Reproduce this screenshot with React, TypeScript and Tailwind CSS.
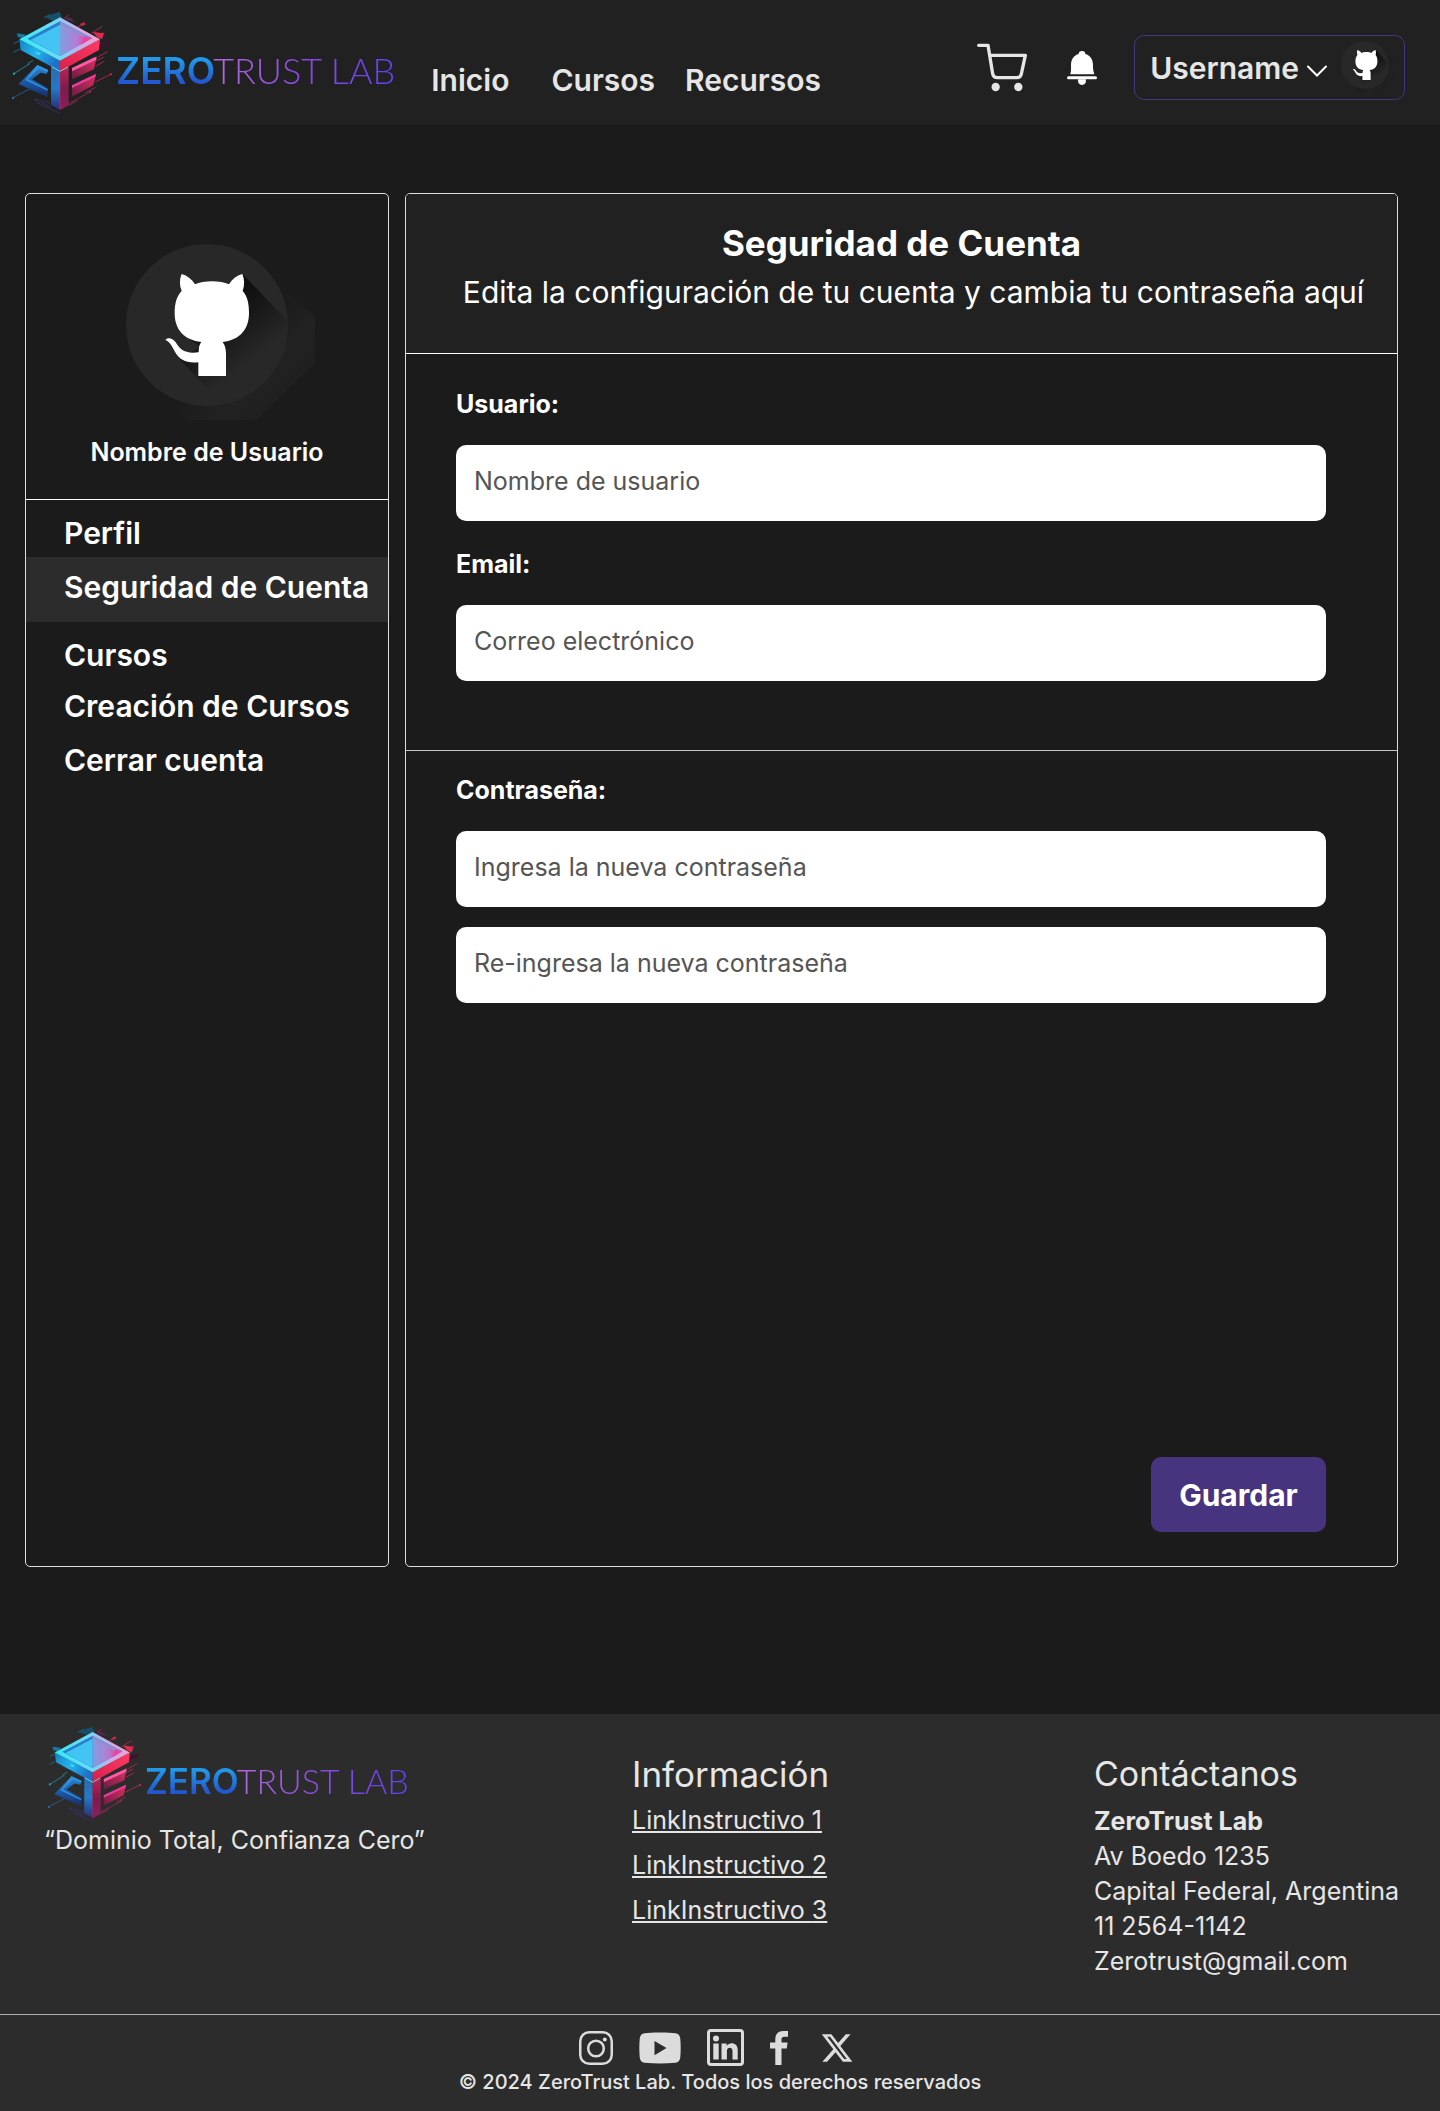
import { useId } from 'react';
import { FaXTwitter } from 'react-icons/fa6';

function CubeMark({ className }: { className: string }) {
  const id = useId();
  const u = (n: string) => `url(#${id}${n})`;
  return (
    <svg viewBox="36 36 300 306" className={className} aria-hidden="true">
      <defs>
        <linearGradient id={`${id}frame`} x1="0" x2="1" y1="0.3" y2="0.2">
          <stop offset="0" stopColor="#35ecf6" />
          <stop offset="0.45" stopColor="#6fd9f7" />
          <stop offset="0.7" stopColor="#c6aee8" />
          <stop offset="1" stopColor="#ff9ecb" />
        </linearGradient>
        <linearGradient id={`${id}inL`} x1="0" x2="1" y1="0" y2="1">
          <stop offset="0" stopColor="#3cc4f2" />
          <stop offset="1" stopColor="#48c4f4" />
        </linearGradient>
        <linearGradient id={`${id}inR`} x1="0" x2="1" y1="0" y2="0">
          <stop offset="0" stopColor="#7f9fe0" />
          <stop offset="0.55" stopColor="#b07fd6" />
          <stop offset="1" stopColor="#f03fa0" />
        </linearGradient>
        <linearGradient id={`${id}bandL`} x1="0" x2="1" y1="0" y2="0.5">
          <stop offset="0" stopColor="#1583c4" />
          <stop offset="0.5" stopColor="#23b5ee" />
          <stop offset="1" stopColor="#1d72c8" />
        </linearGradient>
        <linearGradient id={`${id}bandR`} x1="0" x2="1" y1="1" y2="0">
          <stop offset="0" stopColor="#d8204c" />
          <stop offset="1" stopColor="#ff3a62" />
        </linearGradient>
        <linearGradient id={`${id}z`} x1="0" x2="0" y1="0" y2="1">
          <stop offset="0" stopColor="#2888d0" />
          <stop offset="0.55" stopColor="#1c56a4" />
          <stop offset="1" stopColor="#182c66" />
        </linearGradient>
        <linearGradient id={`${id}pL`} x1="0" x2="0" y1="0" y2="1">
          <stop offset="0" stopColor="#2a6cb0" />
          <stop offset="0.5" stopColor="#2378c8" />
          <stop offset="1" stopColor="#2a2c74" />
        </linearGradient>
        <linearGradient id={`${id}pR`} x1="0" x2="0" y1="0" y2="1">
          <stop offset="0" stopColor="#c02456" />
          <stop offset="0.5" stopColor="#7c1c4a" />
          <stop offset="1" stopColor="#8a1f5c" />
        </linearGradient>
        <linearGradient id={`${id}e`} x1="0" x2="1" y1="1" y2="0">
          <stop offset="0" stopColor="#6b1c44" />
          <stop offset="1" stopColor="#e0305f" />
        </linearGradient>
      </defs>

      <g strokeWidth="2.5" fill="none" strokeLinecap="round">
        <path d="M134 52 150 44M150 50 178 38M44 130 66 118M50 102 72 110M42 156 58 148" stroke="#17789c" />
        <path d="M206 44 196 54M252 70 232 82M306 80 276 98M312 98 300 106M322 155 296 170M312 184 288 198M332 223 286 246M310 172 290 182" stroke="#c02a4c" />
        <path d="M42 221 88 192M84 190 98 182" stroke="#1f93b4" />
        <path d="M38 294 90 266M96 270 104 264" stroke="#2b62a8" />
        <path d="M270 276 204 312M286 262 256 278M206 316 232 302" stroke="#9c2a58" />
        <path d="M104 296 152 322M110 308 180 340M124 300 150 310" stroke="#3b2f70" />
      </g>
      <g>
        <path d="M146 46 178 36 186 52 160 62 138 54Z" fill="#154f68" />
        <path d="M186 50 214 54 224 66 206 62Z" fill="#5a2450" />
        <path d="M54 100 78 104 66 114 52 110Z" fill="#1a78a4" />
        <path d="M278 96 312 100 306 118 292 112Z" fill="#e02a50" />
        <path d="M300 128 332 122 318 138 298 142Z" fill="#3c1430" />
        <path d="M240 72 254 66 256 74 244 78Z" fill="#c42848" />
        <circle cx="42" cy="221" r="3.5" fill="#22a0c0" />
        <circle cx="39" cy="294" r="3.5" fill="#2b6cb8" />
        <circle cx="333" cy="223" r="3" fill="#d03058" />
        <circle cx="271" cy="275" r="2.5" fill="#c03058" />
        <circle cx="108" cy="300" r="3" fill="#2c3a80" />
      </g>

      <path d="M58 118 180 182V214L62 150Z" fill={u('bandL')} />
      <path d="M300 118 180 182V214L297 150Z" fill={u('bandR')} />
      <path d="M106 156 122 160 116 166Z" fill="#4fe0ff" />
      <path d="M180 52 300 118 180 182 58 118Z" fill={u('frame')} />
      <path d="M180 64 276 114 180 168 82 116Z" fill="#2a7fcb" />
      <path d="M180 64 276 114 262 122 180 78Z" fill="#8d8fd0" />
      <path d="M180 74V168L92 120Z" fill={u('inL')} />
      <path d="M180 74 266 120 180 168Z" fill={u('inR')} />
      <path d="M252 108 276 114 244 134Z" fill="#ee3f9f" opacity="0.8" />

      <path d="M112 195 145 210 140 222 122 218 96 238 143 264V292L56 252Z" fill={u('z')} />
      <path d="M112 195 145 210 142 216 116 206 84 238 143 268V272L76 240Z" fill="#2f92dc" />
      <path d="M153 199 180 214V331L153 314Z" fill={u('pL')} />
      <path d="M180 214 206 200V315L180 331Z" fill={u('pR')} />
      <path d="M155 200 180 214 204 201" fill="none" stroke="#6fd8ee" strokeWidth="3" />
      <path d="M180 230V326" stroke="#d03a78" strokeWidth="2" opacity="0.6" />

      <path d="M216 204 290 170 282 208 216 238Z" fill={u('e')} />
      <path d="M216 204 284 172 290 170 288 180 216 214Z" fill="#fb5aa4" />
      <path d="M216 256 288 222 280 256 216 290Z" fill={u('e')} />
      <path d="M216 256 288 222 286 230 216 264Z" fill="#ea3c9e" />
    </svg>
  );
}

function Logo({ small = false }: { small?: boolean }) {
  return (
    <a href="#" aria-label="ZeroTrust Lab" className="flex items-start gap-1">
      <CubeMark className={small ? 'w-[93px] shrink-0' : 'w-[100px] shrink-0'} />
      <span
        className={
          small
            ? 'mt-9 flex items-baseline text-[34px] leading-9 whitespace-nowrap'
            : 'mt-10 flex items-baseline text-[36px] leading-9 whitespace-nowrap'
        }
      >
        <span
          className={
            small
              ? 'bg-linear-to-b from-[#2298ea] from-20% to-[#2357d0] to-80% bg-clip-text text-[35px] font-semibold text-transparent'
              : 'bg-linear-to-b from-[#2298ea] from-20% to-[#2357d0] to-80% bg-clip-text text-[37px] font-semibold text-transparent'
          }
        >
          ZERO
        </span>
        <span className="-ml-0.5 bg-linear-to-r from-[#b06ad8] via-[#8a48e4] to-[#5f42f0] bg-clip-text font-[Lato,sans-serif] font-light text-transparent">
          TRUST LAB
        </span>
      </span>
    </a>
  );
}

function Avatar({ className }: { className: string }) {
  const id = useId();
  return (
    <svg viewBox="378 192 486 486" className={`overflow-visible ${className}`} aria-hidden="true">
      <defs>
        <linearGradient id={`${id}s`} gradientUnits="userSpaceOnUse" x1="640" y1="360" x2="770" y2="530">
          <stop offset="0" stopColor="#0c0c0c" />
          <stop offset="0.55" stopColor="#1a1a1a" />
          <stop offset="1" stopColor="#282828" />
        </linearGradient>
        <linearGradient id={`${id}o`} gradientUnits="userSpaceOnUse" x1="610" y1="610" x2="765" y2="765">
          <stop offset="0" stopColor="#1c1c1c" />
          <stop offset="0.5" stopColor="#222222" />
          <stop offset="1" stopColor="#1e1e1e" />
        </linearGradient>
        <clipPath id={`${id}c`}>
          <circle cx="621" cy="435" r="243" />
        </clipPath>
      </defs>
      <path d="M865 338 945 412V548L770 720H562L520 680Z" fill={`url(#${id}o)`} />
      <circle cx="621" cy="435" r="243" fill="#282828" />
      <g clipPath={`url(#${id}c)`}>
        <path d="M730 284 980 546 780 790 540 540 600 500 560 470Z" fill={`url(#${id}s)`} />
      </g>
      <path
        fill="#fff"
        d="M545 333C538 316 538 298 545 282C562 287 576 298 585 313C610 301 662 301 687 313C696 297 710 287 727 282C734 298 734 316 728 333C742 348 747 370 747 400C747 450 717 481 668 486C675 496 678 507 678 522V588H595V547C562 551 538 541 524 514C514 494 506 483 496 480C502 472 517 473 527 487C541 508 552 522 596 517C596 502 598 493 604 486C554 481 524 450 524 400C524 370 530 348 545 333Z"
      />
    </svg>
  );
}

function CartIcon() {
  return (
    <svg viewBox="108 128 150 145" className="w-[50px]" aria-hidden="true">
      <path
        d="M113 135H141L155 220Q157 232 169 232H228Q239 232 241 221L253 165H147"
        fill="none"
        stroke="#e6e6e6"
        strokeWidth="10"
        strokeLinecap="round"
        strokeLinejoin="round"
      />
      <circle cx="164" cy="260" r="12.5" fill="#e6e6e6" />
      <circle cx="232" cy="260" r="12.5" fill="#e6e6e6" />
    </svg>
  );
}

function BellIcon() {
  return (
    <svg viewBox="378 155 90 102" className="w-[30px]" fill="#fff" aria-hidden="true">
      <path d="M388 225C391 212 390 206 390 196C390 180 399 168 413 164A10 9 0 0 1 433 164C447 168 456 180 456 196C456 206 456 212 460 225Z" />
      <rect x="378" y="231" width="90" height="9" rx="4.5" />
      <path d="M411 240H435Q436 257 423 257Q410 257 411 240Z" />
    </svg>
  );
}

const menu = ['Perfil', 'Seguridad de Cuenta', 'Cursos', 'Creación de Cursos', 'Cerrar cuenta'];
const menuClass = [
  'block pr-3 pl-[38px]',
  'mt-1.5 block bg-[#2c2c2c] pt-3 pr-3 pb-[17px] pl-[38px]',
  'mt-[15px] block pr-3 pl-[38px]',
  'mt-[15px] block pr-3 pl-[38px]',
  'mt-[18px] block pr-3 pl-[38px]',
];

function TextField({ id, type, label, placeholder }: { id: string; type: string; label?: string; placeholder: string }) {
  return (
    <input
      id={id}
      type={type}
      aria-label={label}
      placeholder={placeholder}
      className="h-[76px] w-full rounded-[10px] bg-white px-[18px] pb-1 text-[25px] text-[#333] placeholder:text-[#555] placeholder:opacity-100"
    />
  );
}

function Social() {
  return (
    <div className="mr-2 flex items-center gap-[26px] text-[#dcdcdc]">
      <a href="#" aria-label="Instagram">
        <svg viewBox="0 0 34 34" className="w-[34px]" fill="none" stroke="currentColor" aria-hidden="true">
          <rect x="1.25" y="1.25" width="31.5" height="31.5" rx="9" strokeWidth="2.5" />
          <circle cx="17" cy="17.5" r="7.8" strokeWidth="2.5" />
          <circle cx="25.8" cy="8.4" r="2" fill="currentColor" stroke="none" />
        </svg>
      </a>
      <a href="#" aria-label="YouTube">
        <svg viewBox="0 0 42 32" className="w-[42px]" fill="currentColor" aria-hidden="true">
          <path
            fillRule="evenodd"
            d="M21 .4C28 .4 33 .7 36.500 1.200Q40.600 2 41.200 6Q42.200 16 41.200 26Q40.600 30 36.500 30.800Q21 32.400 5.500 30.800Q1.400 30 .8 26Q-.2 16 .8 6Q1.400 2 5.500 1.200C9 .7 14 .4 21 .4ZM15.500 9V23.200L27.500 16.100Z"
          />
        </svg>
      </a>
      <a href="#" aria-label="LinkedIn">
        <svg viewBox="0 0 37 37" className="w-[37px]" fill="currentColor" aria-hidden="true">
          <rect x="1.500" y="1.500" width="34" height="34" rx="2.500" fill="none" stroke="currentColor" strokeWidth="3" />
          <circle cx="9" cy="9.500" r="3" />
          <path d="M6.300 14.500H11.700V30.500H6.300ZM14.500 14.500H19.600V16.700C22.500 12.600 30.700 13 30.700 20.800V30.500H25.500V22C25.500 17.600 19.900 17.800 19.900 22V30.500H14.500Z" />
        </svg>
      </a>
      <a href="#" aria-label="Facebook">
        <svg viewBox="0 0 18 34" className="w-[18px]" fill="currentColor" aria-hidden="true">
          <path d="M5.300 34V17.500H0V11.500H5.300V8C5.300 2.800 8.300 0 13.200 0H18V5.800H14.500C12.300 5.800 11.500 6.800 11.500 8.600V11.500H17.600L16.800 17.500H11.500V34Z" />
        </svg>
      </a>
      <a href="#" aria-label="X" className="ml-1.5">
        <FaXTwitter className="size-[34px]" aria-hidden="true" />
      </a>
    </div>
  );
}

export default function App() {
  return (
    <div className="min-h-screen bg-[#1b1b1b] font-[Inter,sans-serif] text-white">
      <header className="flex h-[125px] items-start bg-[#212121] pr-[35px] pl-3 text-[30px] leading-9 font-semibold text-[#e6e6e6]">
        <div className="pt-3 font-normal">
          <Logo />
        </div>
        <nav className="ml-9 flex gap-[30px] pt-[62px]">
          <a href="#" className="mr-3">
            Inicio
          </a>
          <a href="#">Cursos</a>
          <a href="#">Recursos</a>
        </nav>
        <div className="ml-auto flex items-center pt-[35px]">
          <button type="button" aria-label="Carrito">
            <CartIcon />
          </button>
          <button type="button" aria-label="Notificaciones" className="ml-10">
            <BellIcon />
          </button>
          <button
            type="button"
            className="ml-[37px] flex h-[65px] items-center rounded-[10px] border border-[#46347f] px-[15px]"
          >
            Username
            <svg viewBox="0 0 20 12" className="mt-1.5 ml-2 w-5" fill="none" stroke="#fff" strokeWidth="2" strokeLinecap="round" aria-hidden="true">
              <path d="M1 1.500 10 10.500 19 1.500" />
            </svg>
            <Avatar className="mb-1.5 ml-[14px] w-12" />
          </button>
        </div>
      </header>

      <main className="flex gap-4 pt-[68px] pr-[42px] pb-[147px] pl-[25px]">
        <aside className="w-[364px] shrink-0 rounded-[5px] border border-[#dedede]">
          <div className="flex flex-col items-center border-b border-white pt-[50px] pb-8">
            <Avatar className="w-[162px]" />
            <p className="mt-[31px] text-[25px] leading-[30px] font-semibold">Nombre de Usuario</p>
          </div>
          <nav className="pt-[15px] text-[30px] leading-9 font-semibold whitespace-nowrap">
            {menu.map((item, i) => (
              <a key={item} href="#" aria-current={i === 1 ? 'page' : undefined} className={menuClass[i]}>
                {item}
              </a>
            ))}
          </nav>
        </aside>

        <section className="flex-1 rounded-[5px] border border-[#dedede]">
          <div className="rounded-t border-b border-white bg-[#212121] pt-[27px] pb-[43px] text-center">
            <h1 className="text-[35px] leading-11 font-bold">Seguridad de Cuenta</h1>
            <p className="mt-[9px] pl-6 text-[30px] leading-9">
              Edita la configuración de tu cuenta y cambia tu contraseña aquí
            </p>
          </div>
          <form onSubmit={(e) => e.preventDefault()}>
            <div className="flex flex-col gap-7 border-b border-[#c4c4c4] pt-[35px] pr-[71px] pb-[69px] pl-[50px]">
              <div className="flex flex-col gap-[26px]">
                <label htmlFor="user" className="text-[25px] leading-[30px] font-bold">
                  Usuario:
                </label>
                <TextField id="user" type="text" placeholder="Nombre de usuario" />
              </div>
              <div className="flex flex-col gap-[26px]">
                <label htmlFor="email" className="text-[25px] leading-[30px] font-bold">
                  Email:
                </label>
                <TextField id="email" type="email" placeholder="Correo electrónico" />
              </div>
            </div>
            <div className="flex flex-col pt-6 pr-[71px] pb-[34px] pl-[50px]">
              <label htmlFor="pass" className="mb-[26px] text-[25px] leading-[30px] font-bold">
                Contraseña:
              </label>
              <div className="flex flex-col gap-5">
                <TextField id="pass" type="password" placeholder="Ingresa la nueva contraseña" />
                <TextField
                  id="pass2"
                  type="password"
                  label="Re-ingresa la nueva contraseña"
                  placeholder="Re-ingresa la nueva contraseña"
                />
              </div>
              <button
                type="submit"
                className="mt-[454px] h-[75px] w-[175px] self-end rounded-[10px] bg-[#47347f] text-[30px] leading-9 font-bold"
              >
                Guardar
              </button>
            </div>
          </form>
        </section>
      </main>

      <footer className="bg-[#2c2c2c] text-[#e6e6e6]">
        <div className="grid grid-cols-[588fr_462fr_306px] border-b border-[#b0b0b0] pr-10 pb-[35px] pl-11">
          <div className="pt-[13px]">
            <div className="pl-1">
              <Logo small />
            </div>
            <p className="text-[25px] leading-9">“Dominio Total, Confianza Cero”</p>
          </div>
          <div className="pt-[38px]">
            <h2 className="text-[35px] leading-11">Información</h2>
            <ul className="mt-[9px] flex flex-col gap-[15px] text-[25px] leading-[30px]">
              {[1, 2, 3].map((n) => (
                <li key={n}>
                  <a href="#" className="underline decoration-2 underline-offset-[2px]">
                    LinkInstructivo {n}
                  </a>
                </li>
              ))}
            </ul>
          </div>
          <div className="pt-[38px]">
            <h2 className="text-[34px] leading-11">Contáctanos</h2>
            <address className="mt-2 text-[25px] leading-[35px] whitespace-nowrap not-italic">
              <p className="font-bold">ZeroTrust Lab</p>
              <p>Av Boedo 1235</p>
              <p>Capital Federal, Argentina</p>
              <p>11 2564-1142</p>
              <p>
                <a href="mailto:Zerotrust@gmail.com">Zerotrust@gmail.com</a>
              </p>
            </address>
          </div>
        </div>
        <div className="flex flex-col items-center pt-[14px] pb-[17px]">
          <Social />
          <p className="mt-1 text-xl leading-6 font-medium">© 2024 ZeroTrust Lab. Todos los derechos reservados</p>
        </div>
      </footer>
    </div>
  );
}
